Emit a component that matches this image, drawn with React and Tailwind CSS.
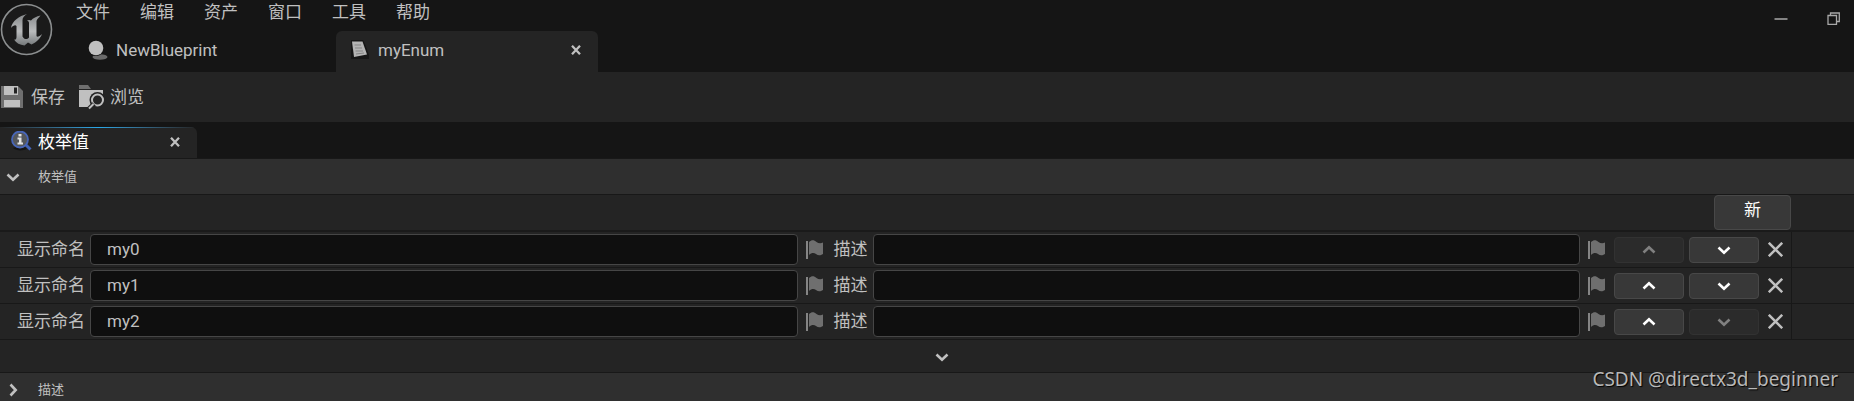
import React from 'react';

const menus = ['文件', '编辑', '资产', '窗口', '工具', '帮助'];
const rows = ['my0', 'my1', 'my2'];

const Chevron = ({ className }) => (
  <svg className={className} width="14" height="14" viewBox="0 0 14 14" fill="none" stroke="currentColor" strokeWidth="2.6">
    <path d="M1.5 4.5 7 9.7 12.5 4.5" />
  </svg>
);

const CloseIcon = () => (
  <svg width="10" height="10" viewBox="0 0 10 10" fill="none" stroke="currentColor" strokeWidth="2.3">
    <path d="M1 0.8 9 9.2M9 0.8 1 9.2" />
  </svg>
);

const Logo = () => (
  <svg width="54" height="56" viewBox="0 0 54 56">
    <defs>
      <linearGradient id="logoFill" x1="0" y1="0" x2="0" y2="1">
        <stop offset="0" stopColor="#85888a" />
        <stop offset="0.55" stopColor="#b9bbbc" />
        <stop offset="1" stopColor="#74787a" />
      </linearGradient>
    </defs>
    <circle cx="26.5" cy="29.5" r="25" fill="#1a1a1a" stroke="#8c8f90" strokeWidth="1.6" />
    <path
      d="M27 14C19 16 12 21 11 28C13 25.5 15.500 24.500 16.500 26V37C16.500 39 15.500 40 14 39.500C16 43 20 45 24.500 45.500L28 42.500L31.500 44.500C37 42 40 38.500 42 34C39.500 36.500 37 37.500 36.500 36V21C37 19 39 17.500 40.500 15.500C36.500 16.500 33 18 31 20.500C29.500 19.500 28 20 27 20.500C28.500 21 29 22 29 23V37.500C27 40 24 39.500 22.500 36.500V20C22.500 17.500 24.500 15.500 27 14Z"
      fill="url(#logoFill)"
    />
  </svg>
);

const BlueprintIcon = () => (
  <svg width="20" height="20" viewBox="0 0 20 20">
    <ellipse cx="12" cy="17" rx="7.500" ry="2.800" fill="#6a6a6a" />
    <circle cx="8" cy="8" r="8" fill="#151515" />
    <circle cx="8" cy="8" r="7.300" fill="#c0c0c0" />
  </svg>
);

const EnumIcon = () => (
  <svg width="20" height="20" viewBox="0 0 20 20">
    <path d="M1 0H13L15 4L19 15V19H1Z" fill="#161616" />
    <path d="M2 1.500H12.500L17 14.500L4 17Z" fill="#b4b4b4" />
    <path d="M4.500 5H11M5 8H12M5.500 11H13M6 14 14 13" stroke="#858585" fill="none" />
  </svg>
);

const SaveIcon = () => (
  <svg width="22" height="24" viewBox="0 0 22 24">
    <path d="M0 1H17L22 6V23H0Z" fill="#6f6f6f" />
    <path d="M3 1H17V10H3ZM3 15H19V22H3Z" fill="#c0c0c0" />
    <path d="M13 2.500H16V8.500H13Z" fill="#242424" />
  </svg>
);

const BrowseIcon = () => (
  <svg width="26" height="26" viewBox="0 0 26 26">
    <path d="M0 1H9L12 5H0Z" fill="#6f6f6f" />
    <path d="M0 6H24V12H20L12 23H0Z" fill="#c0c0c0" />
    <circle cx="18.500" cy="16" r="8" fill="#242424" />
    <circle cx="18.500" cy="16" r="5.500" fill="none" stroke="#c0c0c0" strokeWidth="2" />
    <path d="M15 20 10 25" stroke="#242424" strokeWidth="5" />
    <path d="M14.500 20 10 24.500" stroke="#c0c0c0" strokeWidth="2" />
  </svg>
);

const DetailsIcon = () => (
  <svg width="21" height="21" viewBox="0 0 21 21">
    <path d="M2 17C5 20 12 20 16 18L12 14Z" fill="#141414" />
    <path d="M14 13 19.500 18.500" stroke="#4364b8" strokeWidth="3" />
    <circle cx="9" cy="8.500" r="8" fill="#55585c" stroke="#4866b8" strokeWidth="1.800" />
    <path d="M7.500 3H10.500V5.500H7.500ZM6.500 6.500H10.500V11.500H12V13.500H6.500V11.500H8V8.500H6.500Z" fill="#e4e4e4" />
  </svg>
);

const FlagIcon = () => (
  <svg className="shrink-0" width="18" height="20" viewBox="0 0 18 20">
    <path d="M0 1H2V19H0Z" fill="#858585" />
    <path d="M3 2C6 -0.500 8 0 10.500 2C12.500 3.500 15 3.500 17 2.500V14C14 16 12 15.500 10 14C8 12.500 5.500 12.500 3 15Z" fill="#6f6f6f" />
  </svg>
);

const MoveButton = ({ up, disabled, label }) => (
  <button
    disabled={disabled}
    aria-label={label}
    className="flex h-[26px] w-[70px] shrink-0 items-center justify-center rounded border border-[#484848] bg-[#383838] text-white disabled:border-[#323232] disabled:bg-[#2b2b2b] disabled:text-[#808080]"
  >
    <Chevron className={up ? 'rotate-180' : ''} />
  </button>
);

const TextField = ({ id, value }) => (
  <input
    id={id}
    defaultValue={value}
    className="h-[31px] min-w-0 flex-1 rounded border border-[#464646] bg-[#0f0f0f] px-4 pb-[2px] outline-none"
  />
);

const EnumRow = ({ name, first, last }) => (
  <div className="flex border-b border-[#181818]">
    <div className="flex h-[35px] flex-1 items-center border-r border-[#181818] pl-[17px] pr-2">
      <label htmlFor={`${name}-name`} className="mr-[5px] pb-px">
        显示命名
      </label>
      <TextField id={`${name}-name`} value={name} />
      <span className="ml-2 mr-[10px]">
        <FlagIcon />
      </span>
      <label htmlFor={`${name}-desc`} className="mr-[5px] pb-px">
        描述
      </label>
      <TextField id={`${name}-desc`} value="" />
      <span className="mx-2">
        <FlagIcon />
      </span>
      <div className="flex gap-[5px]">
        <MoveButton up disabled={first} label="上移" />
        <MoveButton disabled={last} label="下移" />
      </div>
      <button aria-label="删除" className="ml-[9px] shrink-0">
        <svg width="15" height="15" viewBox="0 0 15 15" fill="none" stroke="currentColor" strokeWidth="2.5">
          <path d="M0.8 0.8 14.2 14.2M14.2 0.8 0.8 14.2" />
        </svg>
      </button>
    </div>
    <div className="w-[62px]" />
  </div>
);

const App = () => {
  return (
    <div className="relative bg-[#242424] font-['Roboto','Noto_Sans_CJK_SC',sans-serif] text-[17px] leading-6 text-[#c0c0c0]">
      <header className="flex h-[72px] bg-[#151515]">
        <div className="w-[76px]">
          <Logo />
        </div>
        <div className="flex flex-1 flex-col justify-between">
          <nav className="flex gap-[30px]">
            {menus.map((item) => (
              <button key={item}>{item}</button>
            ))}
          </nav>
          <div className="flex h-[41px]">
            <button className="flex w-[260px] items-center gap-2 pb-[3px] pl-3">
              <BlueprintIcon />
              NewBlueprint
            </button>
            <div className="flex w-[262px] items-center justify-between rounded-t-md bg-[#242424] pb-[3px] pl-[14px] pr-[17px]">
              <button className="flex items-center gap-2">
                <EnumIcon />
                myEnum
              </button>
              <button aria-label="关闭">
                <CloseIcon />
              </button>
            </div>
          </div>
        </div>
        <div className="flex h-9 items-center gap-[39px] pr-[14px]">
          <button aria-label="最小化">
            <svg width="14" height="14" viewBox="0 0 14 14">
              <path d="M0.500 8H13.500" stroke="#a8a8a8" strokeWidth="1.500" />
            </svg>
          </button>
          <button aria-label="还原">
            <svg width="13" height="13" viewBox="0 0 13 13" fill="none" stroke="#a8a8a8" strokeWidth="1.300">
              <path d="M1 3.500H9.500V12.300H1ZM3.500 3V1H12.300V9.500H10" />
            </svg>
          </button>
        </div>
      </header>

      <div className="flex h-[50px] items-center gap-[14px] pl-px">
        <button className="flex items-center gap-2">
          <SaveIcon />
          保存
        </button>
        <button className="flex items-center gap-[5px]">
          <BrowseIcon />
          浏览
        </button>
      </div>

      <div className="h-[37px] border-b border-[#181818] bg-[#151515] pt-[5px]">
        <div className="h-[31px] w-[197px] overflow-hidden rounded-tr-md bg-[#242424]">
          <div className="h-px bg-linear-to-r from-[#242424] via-[#28a8e8] to-[#242424]" />
          <div className="flex h-[30px] items-center justify-between pb-[3px] pl-[11px] pr-[17px]">
            <button className="flex items-center gap-[6px] text-white">
              <DetailsIcon />
              枚举值
            </button>
            <button aria-label="关闭">
              <CloseIcon />
            </button>
          </div>
        </div>
      </div>

      <button className="flex h-9 w-full items-center gap-[18px] border-b border-[#181818] bg-[#2f2f2f] pl-[6px] text-[13px]">
        <Chevron />
        枚举值
      </button>
      <div className="flex h-[37px] justify-end border-b-2 border-[#1a1a1a] pr-[63px]">
        <button className="h-[35px] w-[77px] rounded border border-[#484848] bg-[#383838] pb-[5px] text-white">新</button>
      </div>
      {rows.map((name, index) => (
        <EnumRow key={name} name={name} first={index === 0} last={index === rows.length - 1} />
      ))}
      <button aria-label="展开" className="flex h-[33px] w-full items-center justify-center border-b border-[#181818] pl-[30px] pt-[2px]">
        <Chevron />
      </button>
      <button className="flex h-7 w-full items-center gap-[18px] bg-[#2f2f2f] pl-[6px] pt-[6px] text-[13px]">
        <Chevron className="-rotate-90" />
        描述
      </button>

      <p className="absolute bottom-[10px] right-4 font-['Noto_Sans',sans-serif] text-[19px] text-[#b8b8b8] text-shadow-[1px_1px_1px_#000000]">
        CSDN @directx3d_beginner
      </p>
    </div>
  );
};

export default App;
